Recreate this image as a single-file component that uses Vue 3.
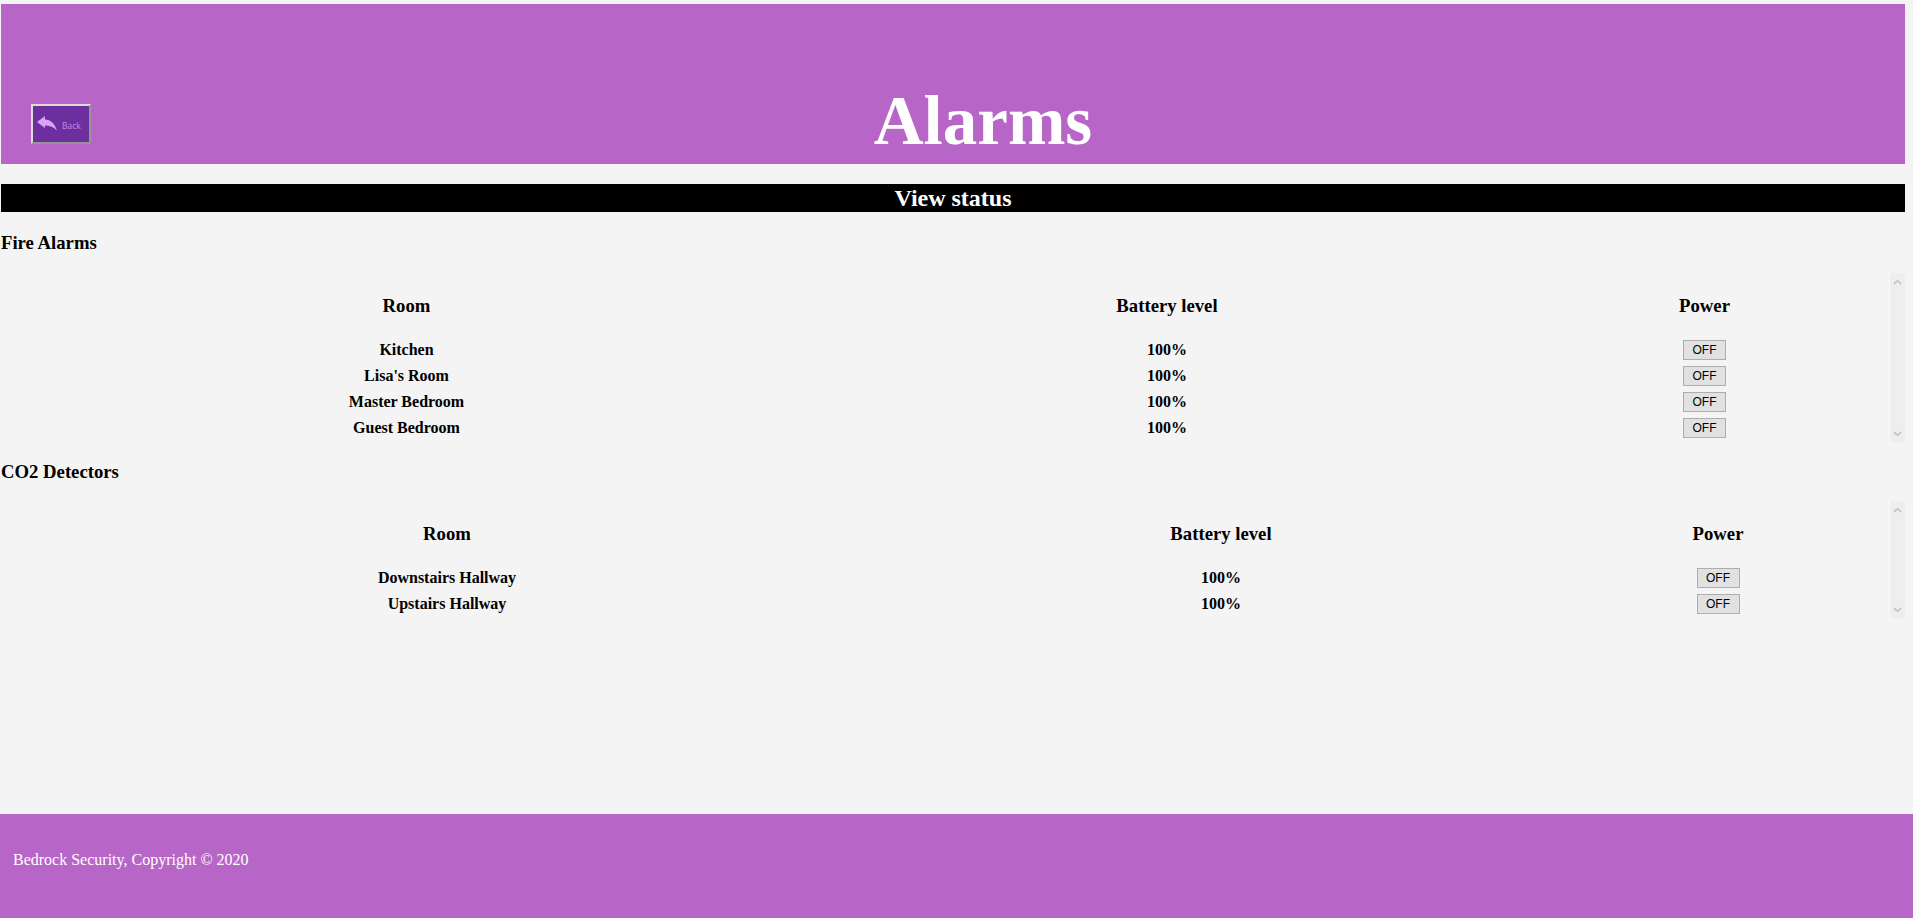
<script setup>
const sections = [
  { key: 'fire', title: 'Fire Alarms', rooms: ['Kitchen', "Lisa's Room", 'Master Bedroom', 'Guest Bedroom'] },
  { key: 'co2', title: 'CO2 Detectors', rooms: ['Downstairs Hallway', 'Upstairs Hallway'] },
]
</script>

<template>
  <div class="page">
    <div class="content">
      <header class="top">
        <button class="back" type="button">
          <svg class="back-icon" viewBox="0 0 20 15" width="20" height="15">
            <path d="M0 6 L8 0 V3.4 C13.5 3.6 18 7.4 19.8 14.5 C16.5 11 13 9.6 8 9.6 V12 Z" fill="#d9a3f7" />
          </svg>
          <span class="back-label">Back</span>
        </button>
        <h1>Alarms</h1>
      </header>
      <h2 class="bar">View status</h2>
      <section v-for="s in sections" :key="s.key" class="group" :class="s.key">
        <h3>{{ s.title }}</h3>
        <div class="scroller">
          <table>
            <colgroup>
              <col class="c1" />
              <col class="c2" />
              <col />
            </colgroup>
            <thead>
              <tr>
                <th>Room</th>
                <th>Battery level</th>
                <th>Power</th>
              </tr>
            </thead>
            <tbody>
              <tr v-for="room in s.rooms" :key="room">
                <td>{{ room }}</td>
                <td>100%</td>
                <td><button class="toggle" type="button">OFF</button></td>
              </tr>
            </tbody>
          </table>
          <div class="scrollbar">
            <svg viewBox="0 0 10 6" width="9" height="6"><path d="M1 5.2 L5 1.5 L9 5.2" fill="none" stroke="#c6c6c6" stroke-width="2" /></svg>
            <svg viewBox="0 0 10 6" width="9" height="6"><path d="M1 .8 L5 4.5 L9 .8" fill="none" stroke="#c6c6c6" stroke-width="2" /></svg>
          </div>
        </div>
      </section>
    </div>
    <footer class="foot">Bedrock Security, Copyright © 2020</footer>
  </div>
</template>

<style>
html, body { margin: 0; background: #f4f4f4; }
</style>

<style scoped>
.page {
  height: 918px;
  display: flex;
  flex-direction: column;
  font-family: "Liberation Serif", serif;
  color: #000;
  background: #f4f4f4;
  overflow: hidden;
}
.content {
  flex: 1;
  padding: 4px 8px 0 1px;
}
.top {
  height: 160px;
  box-sizing: border-box;
  background: #b766c7;
  display: flex;
  align-items: flex-end;
  padding: 0 30px 20px;
}
.back {
  width: 60px;
  height: 40px;
  box-sizing: border-box;
  padding: 0 0 0 4px;
  border: 2px solid;
  border-color: #dcdcdc #969696 #969696 #dcdcdc;
  background: #6d2f9e;
  display: flex;
  align-items: center;
  gap: 5px;
}
.back-icon { flex: none; margin-top: -1px; }
.back-label {
  font-family: "Open Sans", sans-serif;
  font-size: 8.5px;
  color: #c58ae8;
  margin-top: 2px;
}
h1 {
  flex: 1;
  margin: 0 0 -17px;
  text-align: center;
  color: #fff;
  font-size: 69px;
  line-height: 80px;
  font-weight: 700;
}
.bar {
  margin: 20px 0 0;
  height: 28px;
  line-height: 28px;
  text-align: center;
  background: #000;
  color: #fff;
  font-size: 24px;
  font-weight: 700;
}
.group h3 {
  margin: 19px 0;
  font-size: 18.72px;
  line-height: 21px;
  font-weight: 700;
}
.fire h3 { margin: 20px 0; }
.co2 h3 { margin: 18.5px 0 19px; }
.scroller { display: flex; }
table {
  flex: 1;
  min-width: 0;
  table-layout: fixed;
  border-spacing: 2px;
}
.fire .c1 { width: 807px; }
.fire .c2 { width: 710px; }
.co2 .c1 { width: 888px; }
.co2 .c2 { width: 656px; }
th {
  padding: 20px 2px;
  font-size: 18.72px;
  line-height: 21px;
  font-weight: 700;
  text-align: center;
}
td {
  padding: 2px;
  height: 20px;
  font-size: 16px;
  font-weight: 700;
  text-align: center;
}
th:last-child,
td:last-child { padding-right: 4px; }
.toggle {
  display: block;
  margin: 0 auto;
  width: 43px;
  height: 20px;
  box-sizing: border-box;
  padding: 0;
  border: 1px solid #adadad;
  background: #e1e1e1;
  color: #000;
  font-family: "Liberation Sans", sans-serif;
  font-size: 12px;
}
.scrollbar {
  flex: none;
  width: 16px;
  border-left: 1px solid #fafafa;
  background: #eeeeee;
  display: flex;
  flex-direction: column;
  align-items: center;
  justify-content: space-between;
  padding: 6px 0 5px;
  box-sizing: border-box;
}
.foot {
  flex: none;
  height: 104px;
  box-sizing: border-box;
  background: #b766c7;
  color: #fff;
  font-size: 16px;
  line-height: 18px;
  padding: 37px 0 0 13px;
}
</style>
